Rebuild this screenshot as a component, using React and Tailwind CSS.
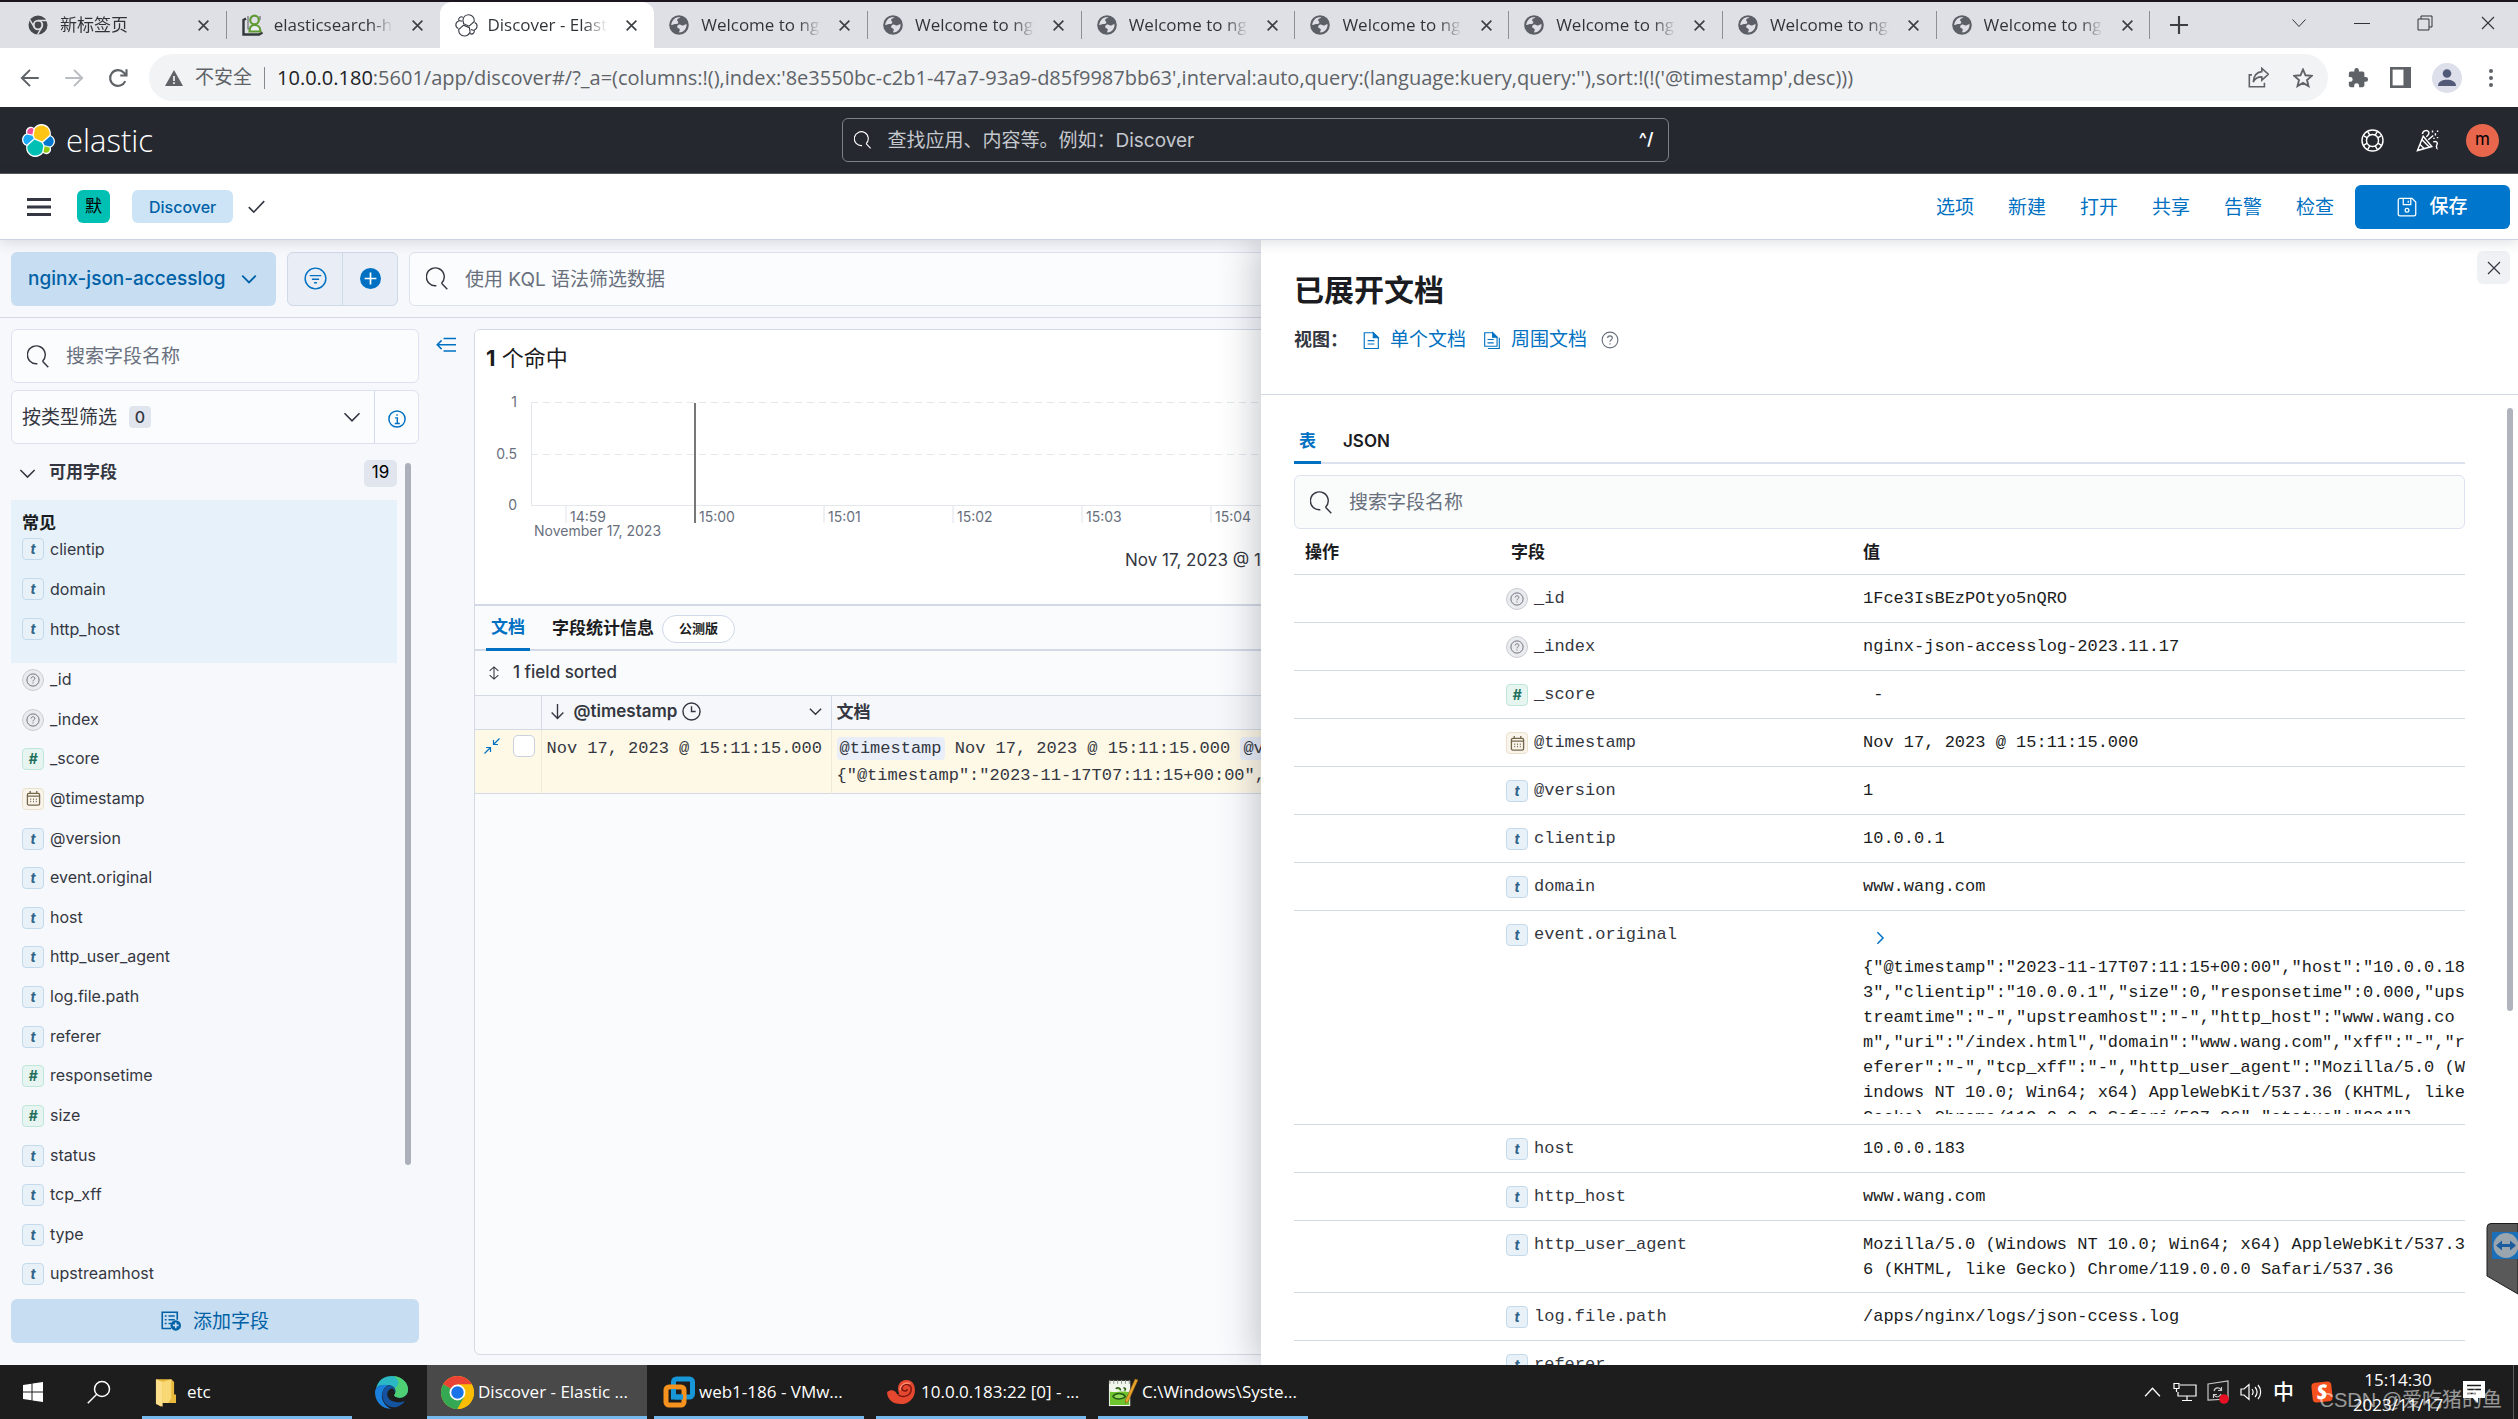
import React from "react";

/* ---------- icons ---------- */

function Svg({ size = "size-5", box = 16, children, ...rest }) {
  return (
    <svg viewBox={`0 0 ${box} ${box}`} className={`${size} shrink-0`} fill="none" stroke="currentColor" aria-hidden="true" {...rest}>
      {children}
    </svg>
  );
}

const Search = ({ size }) => (
  <Svg size={size}><path d="M10.800 11.300A6.200 6.200 0 1 0 7.200 13M10.800 11.300l4 4.200" /></Svg>
);
const ChevronDown = ({ size, width = 1.3 }) => (
  <Svg size={size} strokeWidth={width}><path d="M2 5l6 6 6-6" /></Svg>
);
const Cross = ({ size, width = 1.2 }) => (
  <Svg size={size} strokeWidth={width}><path d="M2 2l12 12M14 2L2 14" /></Svg>
);
const Help = ({ size }) => (
  <Svg size={size}>
    <circle cx="8" cy="8" r="7" />
    <path d="M5.900 6.300c0-1.200.9-2 2.100-2s2.100.8 2.100 1.900c0 1.500-2.100 1.600-2.100 3.300M8 10.800v1.200" />
  </Svg>
);
const Doc = ({ size }) => (
  <Svg size={size}><path d="M2 1.500h8L14.500 6v9.500H2zM5 8.500h6M5 11.500h6" /><path d="M10 1.500V6h4.500z" fill="currentColor" /></Svg>
);
const Docs = ({ size }) => (
  <Svg size={size}><path d="M1.500 1.500h7L12.500 5.500v8h-11zM4 7.500h5.500M4 10.500h5.500M14.500 6v9.500H4.500" /><path d="M8.500 1.500v4h4z" fill="currentColor" /></Svg>
);
const ElasticPaths = () => (
  <>
    <path fill="#FEC514" d="M12.58 13.787l7.002 3.211 7.066-6.213c.102-.512.154-1.025.154-1.562 0-4.324-3.511-7.843-7.827-7.843-2.583 0-4.99 1.276-6.45 3.416l-1.174 6.1 1.23 2.891z" />
    <path fill="#00BFB3" d="M5.333 21.214a7.93 7.93 0 0 0-.15 1.573c0 4.336 3.522 7.864 7.849 7.864 2.605 0 5.045-1.288 6.502-3.448l1.167-6.077-1.557-2.975-7.03-3.201-6.781 6.264z" />
    <path fill="#F04E98" d="M5.29 9.1l4.798 1.134 1.05-5.46a3.81 3.81 0 0 0-2.312-.777 3.795 3.795 0 0 0-3.536 5.103z" />
    <path fill="#1BA9F5" d="M4.872 10.243c-2.143.71-3.6 2.773-3.6 5.033 0 2.178 1.344 4.12 3.36 4.888l6.732-6.083-1.236-2.642-5.256-1.196z" />
    <path fill="#93C90E" d="M20.873 27.204a3.79 3.79 0 0 0 2.303.789c2.092 0 3.795-1.703 3.795-3.796a3.79 3.79 0 0 0-.258-1.382l-4.794-1.121-1.046 5.51z" />
    <path fill="#0077CC" d="M21.848 20.563l5.278 1.234c2.145-.71 3.602-2.772 3.602-5.033 0-2.173-1.348-4.109-3.373-4.877l-6.902 6.045 1.395 2.631z" />
  </>
);
const ElasticLogo = () => (
  <svg viewBox="0 0 32 32" className="size-[33px] shrink-0" aria-hidden="true">
    <path fill="#FFF" d="M32 16.77c0-2.681-1.663-5.02-4.165-5.94.111-.571.165-1.15.165-1.745C28 4.075 23.925 0 18.916 0c-2.929 0-5.65 1.401-7.358 3.771a4.815 4.815 0 0 0-2.953-1.005c-2.668 0-4.839 2.17-4.839 4.839 0 .583.103 1.148.294 1.677C1.571 10.171 0 12.557 0 15.23c0 2.696 1.668 5.044 4.18 5.965-.111.569-.167 1.15-.167 1.743 0 4.996 4.063 9.06 9.059 9.06 2.932 0 5.648-1.406 7.35-3.779a4.8 4.8 0 0 0 2.952 1.02c2.668 0 4.838-2.17 4.838-4.84 0-.582-.103-1.147-.294-1.676C30.428 21.83 32 19.443 32 16.77" />
    <ElasticPaths />
  </svg>
);

const Favicon = ({ kind }) => {
  if (kind === "chrome")
    return (
      <svg viewBox="0 0 20 20" className="size-5 shrink-0" aria-hidden="true">
        <circle cx="10" cy="10" r="9.500" fill="#45494d" />
        <circle cx="10" cy="10" r="4.300" fill="#45494d" stroke="#dee0e6" strokeWidth="1.800" />
        <path d="M10 5.500h9M6.200 12.200L1.900 4.800M13.900 12.200l-4.300 7.400" stroke="#dee0e6" strokeWidth="1.400" />
      </svg>
    );
  if (kind === "head")
    return (
      <svg viewBox="0 0 22 22" className="size-[22px] shrink-0" fill="none" aria-hidden="true">
        <path d="M4 4.500L1.500 6v14.500H17l3.500-2" stroke="#33383b" strokeWidth="2.400" />
        <path d="M6 2v13h3M18 2v4" stroke="#6b7073" strokeWidth="1.200" />
        <circle cx="12.500" cy="6" r="4.300" stroke="#5f9a32" strokeWidth="2.200" />
        <path d="M7.500 17.500c0-4 1.500-6.500 5-6.500s6 2.500 6 6.500z" stroke="#5f9a32" strokeWidth="2.200" fill="#e9eef0" />
      </svg>
    );
  if (kind === "elastic")
    return (
      <svg viewBox="0 0 32 32" className="size-[23px] shrink-0" fill="none" stroke="#343741" strokeWidth="1.500" aria-hidden="true">
        <path d="M12 13.500L11 8.500C11.500 4 15 1 19 1c4.300 0 7.800 3.500 7.800 8 0 .800-.1 1.300-.2 1.800L19.600 17z" />
        <path d="M20 19l1 6c-1.500 3.500-4.500 5.600-8 5.600-4.300 0-7.800-3.500-7.800-7.800 0-.600 0-1 .2-1.600L12 15.500z" />
        <path d="M10 10L5.300 9a3.800 3.800 0 0 1 5.800-4.300M4.900 10.200a5.300 5.300 0 0 0-.3 10M27 21.800a5.300 5.300 0 0 0 .3-10M20.900 27.200a3.800 3.800 0 0 0 5.800-4.400l-4.800-1.100" />
      </svg>
    );
  return (
    <svg viewBox="0 0 20 20" className="size-5 shrink-0" aria-hidden="true">
      <circle cx="10" cy="10" r="9.800" fill="#5c6066" />
      <path d="M11.500 2.200c-1 1.300-3.200 1-3.400 2.800-.1 1.300 1.300 1.300 1.200 2.700-.1 1.600-3 .9-5 1.700-.9.400-2 .6-2 .6s.2-5.700 5.400-7.500c1.800-.6 3.800-.3 3.800-.3zM10 9.500c1.800-.5 2.200 1 4 1 1.500.1 1-1.500 3.600-1.300 0 4-2.200 8-7.400 8.400-.3-1.500.8-1.700.6-3-.2-1.400-2.400-.8-2.600-2.500-.1-1.200.6-2.200 1.800-2.600z" fill="#dee0e6" />
    </svg>
  );
};

function Token({ kind }) {
  if (kind === "t")
    return <span className="flex size-[22px] shrink-0 items-center justify-center rounded border border-[#c3d9ec] bg-[#e9f1f8] text-[14px] leading-none font-bold text-[#2f6489] italic">t</span>;
  if (kind === "#")
    return <span className="flex size-[22px] shrink-0 items-center justify-center rounded border border-[#bfe6da] bg-[#e7f5f1] text-[14px] leading-none font-bold text-[#24705c] italic">#</span>;
  if (kind === "d")
    return (
      <span className="flex size-[22px] shrink-0 items-center justify-center rounded border border-[#ebe0ca] bg-[#f9f5ec] text-[#75674a]">
        <Svg size="size-[15px]" strokeWidth="1.400"><rect x="1.500" y="2.500" width="13" height="12.500" rx="1.500" /><path d="M1.500 5.500h13M4.500 0v3M11.500 0v3" /><path d="M5 8v5M8 8v5M11 8v5" strokeWidth="1" strokeDasharray="1.500 1" /></Svg>
      </span>
    );
  return (
    <span className="flex size-[22px] shrink-0 items-center justify-center rounded-full border border-[#cbcdd3] bg-[#eaebef] text-[#5f636e]">
      <Help size="size-[14px]" />
    </span>
  );
}

/* ---------- browser chrome ---------- */

const TABS = [
  ["chrome", "新标签页"],
  ["head", "elasticsearch-head"],
  ["elastic", "Discover - Elastic"],
  ...Array.from({ length: 7 }, () => ["globe", "Welcome to nginx!"]),
];

function BrowserTabs() {
  return (
    <div className="flex h-12 items-stretch border-t-2 border-[#1b1520] bg-[#dee0e6] text-[17px] text-[#3c4043]">
      <div className="flex w-[85.400%] pl-[13px]" role="tablist">
        {TABS.map(([icon, title], i) => {
          const active = i === 2;
          const line = i !== 1 && i !== 2;
          return (
            <div key={i} role="tab" aria-selected={active} className={`flex min-w-0 flex-1 items-center ${active ? "rounded-t-xl bg-white" : ""}`}>
              <span className="flex w-[47px] shrink-0 items-center pl-[15px]"><Favicon kind={icon} /></span>
              <span className={`min-w-0 flex-1 overflow-hidden bg-gradient-to-r from-[#2f3337] from-80% ${active ? "to-white" : "to-[#dee0e6]"} bg-clip-text leading-7 whitespace-nowrap text-transparent`}>{title}</span>
              <button type="button" aria-label="关闭标签页" className="mr-3 ml-[14px] flex size-5 items-center justify-center"><Cross size="size-[13px]" width={2} /></button>
              <span className={`h-7 w-px ${line ? "bg-[#8d9096]" : ""}`} />
            </div>
          );
        })}
      </div>
      <button type="button" aria-label="新标签页" className="ml-5 flex w-8 items-center justify-start">
        <Svg size="size-[18px]" strokeWidth="1.900"><path d="M8 0v16M0 8h16" /></Svg>
      </button>
      <div className="ml-auto flex items-center gap-[47px] pr-[22px] pb-1 text-[#2f3337]">
        <button type="button" aria-label="搜索标签页" className="flex"><Svg size="size-4"><path d="M1.500 4.500L8 11.500l6.500-7" /></Svg></button>
        <button type="button" aria-label="最小化" className="flex"><Svg size="size-4"><path d="M0 8.500h16" /></Svg></button>
        <button type="button" aria-label="还原" className="flex"><Svg size="size-4"><path d="M1 4h11v11H1zM4 4V1h11v11h-3" /></Svg></button>
        <button type="button" aria-label="关闭" className="flex"><Cross size="size-4" width={1.1} /></button>
      </div>
    </div>
  );
}

function AddressBar() {
  return (
    <div className="flex h-[59px] items-center bg-white text-[#5f6368]">
      <div className="flex w-[149px] shrink-0 items-center gap-6 pl-5">
        <button type="button" aria-label="后退" className="flex"><Svg size="size-5" strokeWidth="1.600"><path d="M15 8H2M8 1.500L1.500 8 8 14.500" /></Svg></button>
        <button type="button" aria-label="前进" className="flex text-[#b9bcc0]"><Svg size="size-5" strokeWidth="1.600"><path d="M1 8h13M8 1.500L14.500 8 8 14.500" /></Svg></button>
        <button type="button" aria-label="重新加载" className="flex"><Svg size="size-5" strokeWidth="1.700"><path d="M13.800 10.500A6.300 6.300 0 1 1 12.700 3.800L14.500 5.600M14.800 1v5H9.800" /></Svg></button>
      </div>
      <div className="flex h-[47px] min-w-0 flex-1 items-center rounded-full bg-[#f1f3f5] pr-[15px] pl-4">
        <svg viewBox="0 0 18 16" className="h-4 w-[18px] shrink-0" aria-hidden="true"><path d="M9 0l9 16H0z" fill="#5f6368" /><path d="M9 6v5M9 12.200v1.800" stroke="#f1f3f5" strokeWidth="1.700" /></svg>
        <span className="ml-3 text-[19px]">不安全</span>
        <span className="mx-3 h-[22px] w-px bg-[#85888c]" />
        <span className="min-w-0 flex-1 overflow-hidden text-[20px] whitespace-nowrap">
          <span className="text-[#202124]">10.0.0.180</span>:5601/app/discover#/?_a=(columns:!(),index:'8e3550bc-c2b1-47a7-93a9-d85f9987bb63',interval:auto,query:(language:kuery,query:''),sort:!(!('@timestamp',desc)))
        </span>
        <button type="button" aria-label="分享" className="flex"><Svg size="size-[21px]" strokeWidth="1.200"><path d="M3 6H1v9h11.500v-3M10.500 1l5 4.500-5 4.500V7.500C7 7.500 5 9 4 11.500 4.200 7 6.500 4 10.500 3.500z" /></Svg></button>
        <button type="button" aria-label="收藏" className="ml-6 flex"><Svg size="size-5" strokeWidth="1.500"><path d="M8 1.200l2 4.600 5 .5-3.800 3.300 1.200 4.900L8 11.900l-4.400 2.600 1.200-4.900L1 6.300l5-.5z" /></Svg></button>
      </div>
      <div className="flex items-center gap-[21px] pr-[25px] pl-[19px]">
        <button type="button" aria-label="扩展程序" className="flex"><svg viewBox="0 0 24 24" className="size-[22px]" fill="currentColor" aria-hidden="true"><path d="M20.500 11H19V7a2 2 0 0 0-2-2h-4V3.500a2.500 2.500 0 0 0-5 0V5H4a2 2 0 0 0-2 2v3.800h1.500a2.700 2.700 0 0 1 0 5.400H2V20a2 2 0 0 0 2 2h3.800v-1.500a2.700 2.700 0 0 1 5.400 0V22H17a2 2 0 0 0 2-2v-4h1.500a2.500 2.500 0 0 0 0-5z" /></svg></button>
        <button type="button" aria-label="侧边栏" className="flex"><Svg size="size-[21px]"><rect x="1" y="1" width="14" height="14" strokeWidth="2" /><path d="M12.500 1v14" strokeWidth="4.500" /></Svg></button>
        <button type="button" aria-label="个人资料" className="flex size-[30px] items-center justify-center rounded-full bg-[#dde0ea] text-[#515b77]"><svg viewBox="0 0 16 16" className="size-[18px]" fill="currentColor" aria-hidden="true"><circle cx="8" cy="4" r="3.800" /><path d="M0 15c0-4 4-5.500 8-5.500s8 1.500 8 5.500z" /></svg></button>
        <button type="button" aria-label="更多" className="flex pl-[6px]"><svg viewBox="0 0 4 18" className="h-[18px] w-1" fill="currentColor" aria-hidden="true"><circle cx="2" cy="2" r="2" /><circle cx="2" cy="9" r="2" /><circle cx="2" cy="16" r="2" /></svg></button>
      </div>
    </div>
  );
}

/* ---------- elastic headers ---------- */

function GlobalHeader() {
  return (
    <header className="grid h-[67px] shrink-0 grid-cols-[1fr_827px_1fr] items-center border-b border-[#55585e] bg-[#25282f] pr-2 text-white">
      <a href="#home" className="flex items-center gap-[11px] pl-[22px] leading-none">
        <ElasticLogo />
        <span className="font-['Open_Sans',sans-serif] text-[31px] leading-[33px] font-light">elastic</span>
      </a>
      <label className="flex h-11 items-center rounded-md border border-[#7d8087] pr-[14px] pl-[11px]">
        <Search size="size-[18px]" />
        <input type="text" aria-label="查找应用" placeholder="查找应用、内容等。例如：Discover" className="ml-4 min-w-0 flex-1 bg-transparent pt-[3px] text-[19px] outline-none placeholder:text-[#c5c8ce]" />
        <span className="text-[17px] font-semibold">^/</span>
      </label>
      <div className="flex items-center justify-end pr-[11px]">
        <button type="button" aria-label="帮助" className="mr-8 flex"><Svg size="size-[23px]"><circle cx="8" cy="8" r="7.300" /><circle cx="8" cy="8" r="4.200" /><path d="M2 4.800l2.400 1.400M4.800 2l1.400 2.400M14 4.800l-2.400 1.400M11.200 2L9.800 4.400M2 11.200l2.400-1.400M4.800 14l1.400-2.400M14 11.200l-2.400-1.400M11.200 14l-1.400-2.400" /></Svg></button>
        <button type="button" aria-label="新闻" className="mr-[27px] flex"><Svg size="size-[23px]"><path d="M5 5L1 15l10-2.800zM4.200 7.500l5 5M2.800 10.800l3 3M4.500 3.500C4.500 1 8.500 0 9 2.500 9.200 4 8 4.500 7.200 5.500M8.500 7.500l3.500-3M12 9c2-1 3.500.5 2.500 2s.5 2.500 0 3M11.500 1v1.500M15 1v1M13.500 3v1.500M15 5.500v1M12 6.500h1" /></Svg></button>
        <button type="button" className="flex size-[33px] items-center justify-center rounded-full bg-[#e7664c] text-[17px] text-black">m</button>
      </div>
    </header>
  );
}

const ACTIONS = ["选项", "新建", "打开", "共享", "告警", "检查"];

function AppHeader() {
  return (
    <nav className="z-10 flex h-[66px] shrink-0 items-center border-b border-[#ccd4e3] bg-white pr-2 pl-[27px] shadow-[0_3px_12px_rgba(60,70,90,0.16)]">
      <button type="button" aria-label="切换主导航" className="flex text-[#343741]"><svg viewBox="0 0 24 18" className="h-[18px] w-6" stroke="currentColor" strokeWidth="3" aria-hidden="true"><path d="M0 1.500h24M0 9h24M0 16.500h24" /></svg></button>
      <button type="button" className="ml-[26px] flex size-[33px] items-center justify-center rounded-md bg-[#00bfb3] text-[17px] text-black">默</button>
      <a href="#discover" className="ml-[22px] flex h-[33px] items-center rounded-md bg-[#cce4f5] px-[17px] text-[16px] font-medium text-[#0061a6]">Discover</a>
      <Svg size="ml-[14px] size-[19px]"><path d="M1.500 8.500l4.200 4.200L14.500 3.500" strokeWidth="1.300" /></Svg>
      <div className="ml-auto flex items-center gap-[34px] text-[19px] text-[#0071c2]">
        {ACTIONS.map((a) => <a key={a} href={`#${a}`} className="pt-[3px]">{a}</a>)}
        <button type="button" className="-ml-[13px] flex h-11 w-[155px] items-center justify-center gap-3 rounded-md bg-[#0077cc] font-medium text-white">
          <Svg size="size-[20px]"><path d="M1 2.500A1.500 1.500 0 0 1 2.500 1H12l3 3v9.500a1.500 1.500 0 0 1-1.500 1.500h-11A1.500 1.500 0 0 1 1 13.500zM5 1v5h6V1M9 3v1.500" /><circle cx="8" cy="10.500" r="1.500" /></Svg>
          <span className="pt-[2px]">保存</span>
        </button>
      </div>
    </nav>
  );
}

function QueryBar() {
  return (
    <div className="flex h-[78px] shrink-0 items-center gap-[11px] border-b border-[#d3dae6] px-[11px]">
      <button type="button" className="flex h-[54px] w-[265px] shrink-0 items-center justify-between rounded-md bg-[#c7ddf1] pr-[18px] pl-[17px] text-[19px] font-medium text-[#0061a6]">
        <span className="pt-px">nginx-json-accesslog</span> <ChevronDown size="size-[18px]" width={1.6} />
      </button>
      <div className="flex h-[54px] w-[111px] shrink-0 rounded-md border border-[#d0d9e8] bg-[#e9edf5] text-[#0071c2]">
        <button type="button" aria-label="筛选菜单" className="flex flex-1 items-center justify-center border-r border-[#d0d9e8]"><Svg size="size-[23px]"><circle cx="8" cy="8" r="7.200" /><path d="M4 6h8M5.500 8.500h5M7 11h2" /></Svg></button>
        <button type="button" aria-label="添加筛选" className="flex flex-1 items-center justify-center"><Svg size="size-[21px]"><circle cx="8" cy="8" r="8" fill="currentColor" stroke="none" /><path d="M8 3.500v9M3.500 8h9" stroke="white" strokeWidth="1.300" /></Svg></button>
      </div>
      <label className="flex h-[54px] min-w-0 flex-1 items-center rounded-md border border-[#dde2ef] bg-[#fbfcfd] pl-4 text-[#343741]">
        <Search size="size-[23px]" />
        <input type="text" aria-label="筛选" placeholder="使用 KQL 语法筛选数据" className="ml-4 min-w-0 flex-1 bg-transparent pt-[3px] text-[19px] outline-none placeholder:text-[#69707d]" />
      </label>
    </div>
  );
}

/* ---------- sidebar ---------- */

const POPULAR = ["clientip", "domain", "http_host"];
const FIELDS = [
  ["?", "_id"], ["?", "_index"], ["#", "_score"], ["d", "@timestamp"], ["t", "@version"],
  ["t", "event.original"], ["t", "host"], ["t", "http_user_agent"], ["t", "log.file.path"],
  ["t", "referer"], ["#", "responsetime"], ["#", "size"], ["t", "status"], ["t", "tcp_xff"],
  ["t", "type"], ["t", "upstreamhost"],
];

function Sidebar() {
  return (
    <aside className="flex w-[408px] shrink-0 flex-col">
      <label className="flex h-[54px] shrink-0 items-center rounded-md border border-[#dde1f0] bg-[#fbfcfd] pl-[15px]">
        <Search size="size-[23px]" />
        <input type="text" aria-label="搜索字段名称" placeholder="搜索字段名称" className="ml-4 min-w-0 flex-1 bg-transparent pt-[3px] text-[19px] outline-none placeholder:text-[#69707d]" />
      </label>
      <div className="mt-[7px] flex h-[54px] shrink-0 rounded-md border border-[#dde1f0] bg-[#fbfcfd]">
        <button type="button" className="flex flex-1 items-center border-r border-[#d3d9ec] pr-3 pl-[10px] text-[19px]">
          <span className="pt-[2px]">按类型筛选</span>
          <span className="ml-3 flex h-[22px] w-[22px] items-center justify-center rounded bg-[#e0e5ee] text-[16px] font-medium">0</span>
          <span className="ml-auto"><ChevronDown size="size-[20px]" /></span>
        </button>
        <button type="button" aria-label="字段类型帮助" className="flex w-[43px] items-center justify-center pt-1 text-[#0071c2]">
          <Svg size="size-[18px]" strokeWidth="1.300"><circle cx="8" cy="8" r="7.200" /><path d="M6.300 7h2v5M6 12h4.500M8 3.700v1.500" /></Svg>
        </button>
      </div>
      <div className="flex min-h-0 flex-1">
        <div className="flex min-w-0 flex-1 flex-col">
          <button type="button" className="flex h-14 shrink-0 items-center pt-[2px] pl-[7px] text-[17px] font-bold text-[#343741]">
            <ChevronDown size="size-[19px]" />
            <span className="ml-3">可用字段</span>
            <span className="ml-auto flex h-[27px] w-[33px] items-center justify-center rounded-[5px] bg-[#e0e5ee] text-[17px] font-normal text-black">19</span>
          </button>
          <section className="flex h-[163px] shrink-0 flex-col bg-[#e6f1fa] pt-[11px] pl-[11px]">
            <h3 className="h-[18px] text-[17px] leading-6 font-bold text-[#1a1c21]">常见</h3>
            {POPULAR.map((name) => (
              <a key={name} href={`#${name}`} className="flex h-[40px] shrink-0 items-center gap-[6px] text-[16px] text-[#343741]"><Token kind="t" /><span className="pb-px">{name}</span></a>
            ))}
          </section>
          <ul className="flex min-h-0 flex-1 flex-col pb-[2px] pl-[11px]">
            {FIELDS.map(([kind, name]) => (
              <li key={name} className="min-h-0 flex-1 pt-[4px]">
                <a href={`#${name}`} className="flex items-center gap-[6px] text-[16px] leading-6 text-[#343741]"><Token kind={kind} /><span className="pb-[2px]">{name}</span></a>
              </li>
            ))}
          </ul>
        </div>
        <div className="w-[22px] pt-[19px] pl-2"><div className="h-[84%] w-[6px] rounded-full bg-[#abb0ba]" /></div>
      </div>
      <button type="button" className="mb-[22px] flex h-11 shrink-0 items-center justify-center gap-3 rounded-md bg-[#c7ddf1] text-[19px] text-[#0061a6]">
        <Svg size="size-[20px]" strokeWidth="1.300"><path d="M8 14H1V1h12v6M3 4h1.500M6 4h5M3 7h1.500M6 7h5M3 10h1.500M6 10h2" /><circle cx="11.800" cy="11.500" r="4.200" fill="currentColor" stroke="none" /><path d="M11.800 9.200v4.600M9.500 11.500h4.600" stroke="#c7ddf1" /></Svg>
        <span className="pt-[2px]">添加字段</span>
      </button>
    </aside>
  );
}

/* ---------- main panel ---------- */

const TICKS = ["14:59", "15:00", "15:01", "15:02", "15:03", "15:04", "15:05", "15:06", "15:07", "15:08", "15:09", "15:10"];

function Histogram() {
  return (
    <svg className="h-[158px] w-full shrink-0 overflow-hidden text-[14px]" fill="#69707d" role="img" aria-label="按时间划分的命中数">
      <g stroke="#e4e7ec" strokeWidth="1">
        <path d="M56.500 13v103" />
        <path d="M56 115.500h1900" />
        <path d="M56 12.500h1900M56 64.500h1900" strokeDasharray="7 5" />
      </g>
      <text x="42" y="17" textAnchor="end">1</text>
      <text x="42" y="69" textAnchor="end">0.5</text>
      <text x="42" y="120" textAnchor="end">0</text>
      {TICKS.map((t, i) => (
        <g key={t}>
          <path d={`M${91 + i * 129} ${i === 1 ? 13 : 116}V133`} stroke={i === 1 ? "#777777" : "#dfe2e8"} strokeWidth={i === 1 ? 2 : 1} />
          <text x={95 + i * 129} y="132">{t}</text>
        </g>
      ))}
      <text x="59" y="146">November 17, 2023</text>
    </svg>
  );
}

function MainPanel() {
  return (
    <main className="mb-[10px] flex min-w-0 flex-1 flex-col overflow-hidden rounded-md border border-[#d3dae6] bg-[#fafbfd]">
      <section className="flex h-[276px] shrink-0 flex-col border-b-2 border-[#d3dae6] bg-white">
        <h2 className="pt-[12px] pl-[11px] text-[22px] leading-8 text-[#1a1c21]"><b>1</b> 个命中</h2>
        <div className="mt-[16px]"><Histogram /></div>
        <p className="pl-[650px] text-[17px] leading-6 whitespace-nowrap text-[#343741]">Nov 17, 2023 @ 14:59:23.204 - Nov 17, 2023 @ 15:14:23.204</p>
      </section>
      <div role="tablist" className="flex h-[45px] shrink-0 items-stretch border-b-2 border-[#d3dae6] pl-[11px] text-[17px] font-bold text-[#1a1c21]">
        <button type="button" role="tab" aria-selected="true" className="-mb-[2px] border-b-[3px] border-[#0071c2] px-[5px] pt-[2px] text-[#0071c2]">文档</button>
        <button type="button" role="tab" aria-selected="false" className="ml-[17px] flex items-center px-[5px] pt-[2px]">
          字段统计信息
          <span className="ml-2 flex h-7 items-center rounded-full border border-[#cfd9e8] bg-white px-4 text-[13px]">公测版</span>
        </button>
      </div>
      <button type="button" className="flex h-[44px] shrink-0 items-center gap-3 pl-3 text-[17px] font-medium text-[#343741]">
        <Svg size="size-[14px]" strokeWidth="1.200"><path d="M8 1v14M3 5.500L8 1l5 4.500M3 10.500L8 15l5-4.500" /></Svg>
        1 field sorted
      </button>
      <table className="w-full table-fixed border-collapse text-left">
        <thead>
          <tr className="h-[34px] border-y border-[#d3dae6] bg-[#f5f7fa] text-[#343741]">
            <th className="w-[66px] border-r border-[#d3dae6]"><span className="sr-only">控制</span></th>
            <th className="w-[290px] border-r border-[#d3dae6] p-0">
              <span className="flex items-center pr-[8px] pb-[2px] pl-[7px] text-[17px]">
                <Svg size="size-[17px]" strokeWidth="1.300"><path d="M8 1v13.500M2.500 9L8 14.500 13.500 9" /></Svg>
                <span className="ml-2 font-semibold">@timestamp</span>
                <span className="ml-[5px]"><Svg size="size-[19px]" strokeWidth="1.200"><circle cx="8" cy="8" r="7.200" /><path d="M8 3.500V8h3.500" /></Svg></span>
                <span className="ml-auto"><ChevronDown size="size-[15px]" width={1.5} /></span>
              </span>
            </th>
            <th className="p-0 pl-[5px] text-[17px] font-bold">文档</th>
          </tr>
        </thead>
        <tbody>
          <tr className="h-[64px] border-b border-[#d3dae6] bg-[#fef8e6] align-top font-['Liberation_Mono',monospace] text-[17px] leading-[27px] text-[#343741]">
            <td className="border-r border-[#eceada] p-0">
              <span className="flex items-center gap-[13px] pt-[5px] pl-[9px] text-[#0071c2]">
                <button type="button" aria-label="折叠文档" className="flex"><Svg size="size-[16px]" strokeWidth="1.200"><path d="M15.500.500l-6 6M9.500 2v4.500H14M.500 15.500l6-6M2 9.500h4.500V14" /></Svg></button>
                <input type="checkbox" aria-label="选择文档" className="size-[22px] appearance-none rounded-[5px] border border-[#cad0dd] bg-white" />
              </span>
            </td>
            <td className="overflow-hidden border-r border-[#eceada] p-0 pt-[5px] pl-[5px] whitespace-nowrap">Nov 17, 2023 @ 15:11:15.000</td>
            <td className="overflow-hidden p-0 pt-[5px] pl-[5px] whitespace-nowrap">
              <span className="rounded bg-[#eaeef8] px-[3px] py-[2px]">@timestamp</span> Nov 17, 2023 @ 15:11:15.000{" "}
              <span className="rounded bg-[#eaeef8] px-[3px] py-[2px]">@version</span>
              <br />
              {'{"@timestamp":"2023-11-17T07:11:15+00:00","host"'}
            </td>
          </tr>
        </tbody>
      </table>
    </main>
  );
}

/* ---------- document flyout ---------- */

const EVENT = [
  '{"@timestamp":"2023-11-17T07:11:15+00:00","host":"10.0.0.18',
  '3","clientip":"10.0.0.1","size":0,"responsetime":0.000,"ups',
  'treamtime":"-","upstreamhost":"-","http_host":"www.wang.co',
  'm","uri":"/index.html","domain":"www.wang.com","xff":"-","r',
  'eferer":"-","tcp_xff":"-","http_user_agent":"Mozilla/5.0 (W',
  "indows NT 10.0; Win64; x64) AppleWebKit/537.36 (KHTML, like",
  'Gecko) Chrome/119.0.0.0 Safari/537.36","status":"304"}',
].join("\n");

const ROWS = [
  ["?", "_id", "1Fce3IsBEzPOtyo5nQRO"],
  ["?", "_index", "nginx-json-accesslog-2023.11.17"],
  ["#", "_score", " -"],
  ["d", "@timestamp", "Nov 17, 2023 @ 15:11:15.000"],
  ["t", "@version", "1"],
  ["t", "clientip", "10.0.0.1"],
  ["t", "domain", "www.wang.com"],
  ["t", "event.original", EVENT],
  ["t", "host", "10.0.0.183"],
  ["t", "http_host", "www.wang.com"],
  ["t", "http_user_agent", "Mozilla/5.0 (Windows NT 10.0; Win64; x64) AppleWebKit/537.3\n6 (KHTML, like Gecko) Chrome/119.0.0.0 Safari/537.36"],
  ["t", "log.file.path", "/apps/nginx/logs/json-ccess.log"],
  ["t", "referer", ""],
];

function Flyout() {
  return (
    <section role="dialog" aria-label="已展开文档" className="absolute inset-y-0 right-0 flex w-[49.920%] flex-col bg-white text-[#1a1c21] shadow-[-4px_0_36px_rgba(40,45,60,0.28)]">
      <header className="relative h-[155px] shrink-0 border-b border-[#d3dae6] pt-[29px] pl-[33px]">
        <h2 className="text-[30px] leading-[42px] font-bold">已展开文档</h2>
        <div className="mt-[15px] flex items-center text-[19px] leading-7 text-[#0071c2]">
          <strong className="w-[68px] text-[18px] text-[#343741]">视图：</strong>
          <Doc size="size-[18px]" />
          <a href="#doc" className="ml-[10px]">单个文档</a>
          <span className="ml-[17px]"><Docs size="size-[18px]" /></span>
          <a href="#context" className="ml-[10px]">周围文档</a>
          <span className="ml-[14px] text-[#69707d]"><Help size="size-[18px]" /></span>
        </div>
        <button type="button" aria-label="关闭" className="absolute top-[11px] right-2 flex size-[33px] items-center justify-center rounded-md bg-[#f0f1f4] text-[#343741]"><Cross size="size-4" /></button>
      </header>
      <div className="flex min-h-0 flex-1 pt-[13px] pl-[33px]">
        <div className="flex min-w-0 flex-1 flex-col overflow-hidden">
          <div role="tablist" className="flex h-[56px] shrink-0 items-stretch border-b-2 border-[#dbe1ee] pt-[14px] text-[17px] font-bold">
            <button type="button" role="tab" aria-selected="true" className="-mb-[2px] border-b-[3px] border-[#0071c2] px-[5px] text-[#0071c2]">表</button>
            <button type="button" role="tab" aria-selected="false" className="ml-[17px] px-[5px] font-semibold">JSON</button>
          </div>
          <label className="mt-[11px] flex h-[54px] shrink-0 items-center rounded-md border border-[#dde1f0] bg-[#fafcfc] pl-[15px] text-[#343741]">
            <Search size="size-[23px]" />
            <input type="text" aria-label="搜索文档字段" placeholder="搜索字段名称" className="ml-4 min-w-0 flex-1 bg-transparent pt-[3px] text-[19px] outline-none placeholder:text-[#69707d]" />
          </label>
          <table className="w-full table-fixed border-collapse text-left align-top">
            <thead>
              <tr className="h-[45px] border-b border-[#d3dae6] text-[17px]">
                <th className="w-[206px] p-0 pt-[2px] pl-[11px]">操作</th>
                <th className="w-[352px] p-0 pt-[2px] pl-[11px]">字段</th>
                <th className="p-0 pt-[2px] pl-[11px]">值</th>
              </tr>
            </thead>
            <tbody className="font-['Liberation_Mono',monospace] text-[17px] leading-[25px]">
              {ROWS.map(([kind, name, value]) => (
                <tr key={name} className="h-12 border-b border-[#d3dae6] align-top">
                  <td />
                  <td className="p-0 pt-[11px] pl-[6px] text-[#343741]">
                    <span className="flex items-center gap-[6px]"><span className="pt-[2px] font-[Inter,sans-serif]"><Token kind={kind} /></span>{name}</span>
                  </td>
                  <td className="p-0 pt-[11px] pb-[10px] pl-[11px] whitespace-pre">
                    {name === "event.original" ? (
                      <>
                        <button type="button" aria-label="展开" className="flex h-[33px] items-center pl-[10px] text-[#0071c2]"><Svg size="size-[14px]" strokeWidth="1.700"><path d="M5 1.500L11.500 8 5 14.500" /></Svg></button>
                        <div className="h-[159px] overflow-hidden">{value}</div>
                      </>
                    ) : value}
                  </td>
                </tr>
              ))}
            </tbody>
          </table>
        </div>
        <div className="w-[53px] shrink-0 pl-[42px]"><div className="h-[63%] w-[6px] rounded-full bg-[#b1b4bd]" /></div>
      </div>
    </section>
  );
}

/* ---------- taskbar ---------- */

const Vmware = () => (
  <svg viewBox="0 0 32 32" className="h-[34px] w-8 shrink-0" fill="none" strokeWidth="5" aria-hidden="true">
    <rect x="10.500" y="3" width="19" height="18" rx="3" stroke="#1796d8" />
    <rect x="3" y="11" width="18" height="18" rx="3" stroke="#f6921e" />
    <path d="M10.500 13v8H20" stroke="#1796d8" />
  </svg>
);
const Shell = () => (
  <svg viewBox="0 0 32 28" className="h-[26px] w-8 shrink-0" aria-hidden="true">
    <path d="M1 14c4-3 8-2 10 1 1 2 2 2 3 1-3-8 0-15 8-15 6 0 9 5 9 11 0 9-7 15-15 15C7 27 1 22 1 14z" fill="#e5482f" />
    <path d="M13 17c5 4 14 1 14-6 0-6-8-7-10-2-1 4 5 5 6 2" stroke="#7d1710" strokeWidth="1.600" fill="none" />
    <path d="M15 12c0-6 6-9 11-7" stroke="#ff8b6d" strokeWidth="1.500" fill="none" />
  </svg>
);
const Notepad = () => (
  <svg viewBox="0 0 32 32" className="size-[31px] shrink-0" aria-hidden="true">
    <path d="M2 4h22v26H2z" fill="#f1f5ec" />
    <path d="M3 15c6 2 14-2 20 1v13H3z" fill="#6ec52d" />
    <path d="M3 3v4M7 3v4M11 3v4M15 3v4M19 3v4M23 3v4" stroke="#8b8f8b" />
    <path d="M6 20c3-4 10-4 13 0-2 3-10 4-13 0zM9 12c3-2 5 0 5 2M17 11c2 0 3 2 1 3" stroke="#2c5a18" strokeWidth="1.500" fill="#91dd57" />
    <path d="M19 24L29 2l3 1-10 22-3 2z" fill="#e9a52a" stroke="#7b541a" strokeWidth=".6" />
  </svg>
);
const Chrome = () => (
  <svg viewBox="0 0 32 32" className="size-[33px] shrink-0" aria-hidden="true">
    <circle cx="16" cy="16" r="16" fill="#fbbc05" />
    <path d="M16 16L2.150 8A16 16 0 0 1 29.850 8z" fill="#ea4335" />
    <path d="M2.150 8A16 16 0 0 0 16 32l7-12.500-7-3.500z" fill="#34a853" />
    <path d="M16 8h13.850A16 16 0 0 1 16 32l7-12z" fill="#fbbc05" />
    <circle cx="16" cy="16" r="7.700" fill="#fff" />
    <circle cx="16" cy="16" r="6" fill="#1a73e8" />
  </svg>
);

function TaskItem({ icon, label, active }) {
  return (
    <button type="button" className={`flex items-center gap-1 overflow-hidden border-b-[3px] border-[#76b9ed] pt-[3px] text-left whitespace-nowrap ${active ? "w-[220px] bg-[#494949] pl-[14px]" : "w-[210px] pl-[9px]"}`}>
      {icon}
      <span>{label}</span>
    </button>
  );
}

function Taskbar() {
  return (
    <footer className="flex h-[54px] shrink-0 items-stretch bg-[#1d1d1d] text-[17px] text-white">
      <button type="button" aria-label="开始" className="flex w-[65px] items-center justify-center">
        <svg viewBox="0 0 20 20" className="size-5" fill="white" aria-hidden="true"><path d="M0 3l8.500-1.200v7.700H0zM9.500 1.600L20 0v9.500H9.500zM0 10.500h8.500v7.700L0 17zM9.500 10.500H20V20L9.500 18.400z" /></svg>
      </button>
      <button type="button" aria-label="搜索" className="flex w-[68px] items-center justify-center">
        <Svg size="size-6" strokeWidth="1"><circle cx="10" cy="6" r="5" /><path d="M6.500 9.500L.500 15.500" /></Svg>
      </button>
      <div className="flex pl-[9px]">
        <TaskItem icon={<svg viewBox="0 0 22 30" className="mx-1 h-[29px] w-[21px]" aria-hidden="true"><path d="M1 1h16l3 3v13h2v9H7l-1 4-5-4z" fill="#e9b93d" /><path d="M1 1l7 3v26l-7-3z" fill="#fbdf8b" /><path d="M8 4l9-3v20l-3 5H8z" fill="#f8d775" /></svg>} label={<span className="pl-[3px]">etc</span>} />
      </div>
      <button type="button" aria-label="Edge" className="ml-1 flex w-[71px] items-center justify-center">
        <svg viewBox="0 0 32 32" className="size-[33px]" aria-hidden="true">
          <path d="M1 12C3 4 9 0 16 0c9 0 16 6 16 13 0 5-4 8-8 8-4 0-6-2-5-3 2-3 1-8-5-9C8 8 3 9 1 12z" fill="#2bb7c4" />
          <path d="M18 0c8 1 14 6 14 13 0 5-4 8-8 8-4 0-6-2-5-3 2-3 1-5 0-6 5-3 5-8-1-12z" fill="#4fcf74" />
          <path d="M0 16c0-6 6-9 13-7-5 2-7 8-6 13 1 4 4 8 9 9.900C7 32 0 25 0 16z" fill="#1b7fdc" />
          <path d="M13 9c-6 3-7 9-5 14 2 6 10 10 17 5 2-1 3-2 4-4-2 1-4 1.500-7 1.500-6 0-11-4-10-9 .3-2 2-4 4-4.500 2 0 3 2 3 4 1-3-1-7-6-7z" fill="#14539f" />
        </svg>
      </button>
      <TaskItem active icon={<Chrome />} label="Discover - Elastic ..." />
      <div className="ml-[7px] flex gap-3">
        <TaskItem icon={<Vmware />} label="web1-186 - VMw..." />
        <TaskItem icon={<Shell />} label="10.0.0.183:22 [0] - ..." />
        <TaskItem icon={<Notepad />} label="C:\Windows\Syste..." />
      </div>
      <div className="relative ml-auto flex items-center text-[17px]">
        <Svg size="mr-3 size-[17px]" strokeWidth="1.200"><path d="M1 11.500L8 4l7 7.500" /></Svg>
        <svg viewBox="0 0 24 20" className="mr-[9px] h-5 w-6" fill="none" stroke="white" strokeWidth="1.200" aria-hidden="true"><path d="M7 3h16v11H5v-4M14 14v4M9 18.500h10M1 1.500h5v5H1zM3.500 6.500V10" /></svg>
        <svg viewBox="0 0 24 24" className="mr-[10px] size-6" fill="none" stroke="#c9c9c9" strokeWidth="1.200" aria-hidden="true"><path d="M2 4l20-3v18l-20 1zM8 11c1-4 6-4 7-1M12 10.500h3.500V7M15 14c-1 3-5 4-7 1M11 14.500H7.500V18" /><circle cx="18" cy="19" r="4.800" fill="#e81123" stroke="none" /></svg>
        <svg viewBox="0 0 22 20" className="mr-[11px] h-5 w-[22px]" fill="none" stroke="white" strokeWidth="1.200" aria-hidden="true"><path d="M1 7v6h3l5 4.500v-15L4 7zM12 7c1.500 2 1.500 4 0 6M15 5c2.500 3 2.500 7 0 10M18 3c3.500 4 3.500 10 0 14" /></svg>
        <span className="mr-[18px] text-[21px] font-medium">中</span>
        <span className="flex size-5 -rotate-6 items-center justify-center rounded-sm bg-[#f4511e] text-[20px] leading-none font-extrabold italic">S</span>
        <div className="ml-[20px] w-[92px] text-center leading-[25px]"><div>15:14:30</div><div>2023/11/17</div></div>
        <svg viewBox="0 0 22 22" className="ml-[19px] size-[22px]" aria-hidden="true"><path d="M0 0h22v17h-7v5l-5-5H0z" fill="white" /><path d="M4 4.500h14M4 8.500h14M4 12.500h9" stroke="#1d1d1d" strokeWidth="1.500" /></svg>
        <span className="mr-1 ml-[28px] h-full w-px bg-[#5c5c5c]" />
        <span className="absolute right-4 bottom-1 font-['Liberation_Sans','Noto_Sans_CJK_SC',sans-serif] text-[20px] whitespace-nowrap text-white/55">CSDN @爱吃猪的鱼</span>
      </div>
    </footer>
  );
}

export default function App() {
  return (
    <div className="flex h-screen w-full flex-col overflow-hidden bg-[#f7f8fc] font-[Inter,'Noto_Sans_CJK_SC',sans-serif] text-[#343741]">
      <div className="shrink-0 font-['Open_Sans','Noto_Sans_CJK_SC',sans-serif]">
        <BrowserTabs />
        <AddressBar />
      </div>
      <GlobalHeader />
      <AppHeader />
      <div className="relative flex min-h-0 flex-1 flex-col overflow-hidden">
        <QueryBar />
        <div className="flex min-h-0 flex-1 px-[11px] pt-[11px]">
          <Sidebar />
          <button type="button" aria-label="隐藏侧边栏" className="mr-[16px] ml-[17px] mt-[7px] flex size-[22px] shrink-0 items-start text-[#0071c2]">
            <Svg size="size-[20px]" strokeWidth="1.200"><path d="M6 2h10M1 7h15M6 12h10M4.500 3.500L1 7l3.500 3.500" /></Svg>
          </button>
          <MainPanel />
        </div>
        <Flyout />
        <button type="button" aria-label="TeamViewer" className="absolute right-0 bottom-[70px] h-[72px] w-8 overflow-hidden">
          <svg viewBox="0 0 32 72" className="h-[72px] w-8" aria-hidden="true">
            <path d="M32 .500H5a4 4 0 0 0-4 4V53l31 18z" fill="#595959" stroke="#1c1c1c" />
            <path d="M6 9h26v27H6z" fill="#1b6fb8" />
            <circle cx="20" cy="22.500" r="12.500" fill="#9aa5ae" />
            <path d="M10 22.500l6-5v3.500h8v-3.500l6 5-6 5V24h-8v3.500z" fill="#1b5c9e" />
          </svg>
        </button>
      </div>
      <div className="shrink-0 font-['Open_Sans','Noto_Sans_CJK_SC',sans-serif]">
        <Taskbar />
      </div>
    </div>
  );
}
